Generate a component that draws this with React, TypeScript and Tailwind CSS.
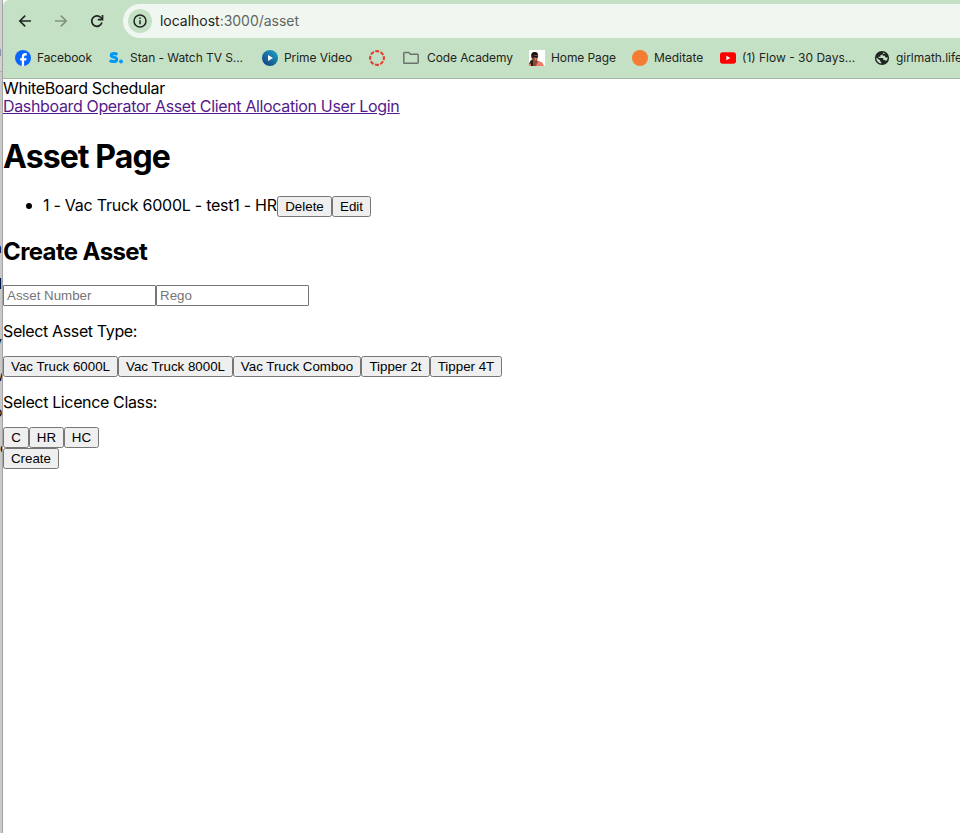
import type { ReactNode } from "react";

function Bookmark({ icon, label, className, text = "tracking-[-0.04px]" }: { icon: ReactNode; label?: string; className: string; text?: string }) {
  return (
    <div className={`flex shrink-0 items-center ${className}`}>
      <span className="flex h-4 w-4 shrink-0 items-center justify-center">{icon}</span>
      {label && <span className={`shrink-0 whitespace-nowrap ${text}`}>{label}</span>}
    </div>
  );
}

function Btn({ children, className }: { children: ReactNode; className: string }) {
  return (
    <button
      className={`flex h-[21px] shrink-0 items-center justify-center whitespace-nowrap rounded-[2.5px] border border-[#767676] bg-[#efefef] font-['Liberation_Sans',Arial,sans-serif] text-[13.333px] leading-[15px] text-black ${className}`}
    >
      {children}
    </button>
  );
}

function BrowserBar() {
  return (
    <header className="h-[79px] shrink-0 overflow-hidden rounded-tl-[6px] border-b border-[#a3b8a4] bg-[#c5e1c5] text-[#1f2421]">
      <div className="flex h-[42px] items-center pl-[14px]">
        <svg width="16" height="16" viewBox="0 0 16 16" fill="none" stroke="#1f2421" strokeWidth="1.6">
          <path d="M14 8H3M8.2 2.6 2.8 8l5.400 5.400" />
        </svg>
        <svg width="16" height="16" viewBox="0 0 16 16" fill="none" stroke="#82927f" strokeWidth="1.6" className="ml-5">
          <path d="M2 8h11M7.800 2.600 13.200 8l-5.400 5.400" />
        </svg>
        <svg width="16" height="16" viewBox="0 0 16 16" fill="none" stroke="#1f2421" strokeWidth="1.700" className="ml-5">
          <path d="M12.900 9.600A5.200 5.200 0 1 1 11.700 4.500L13.200 6" />
          <path d="M13.500 1.900v4.700H8.800" />
        </svg>
        <div className="ml-[18px] flex h-[34px] flex-1 items-center rounded-l-full bg-[#f0f7f0] pl-[5px]">
          <span className="flex h-6 w-6 items-center justify-center rounded-full bg-[#c5e1c5]">
            <svg width="14" height="14" viewBox="0 0 14 14" fill="none" stroke="#1f2421" strokeWidth="1.5">
              <circle cx="7" cy="7" r="6" />
              <path d="M7 6.2v4M7 3.6v1.4" />
            </svg>
          </span>
          <span className="-mt-px ml-2 whitespace-nowrap text-[14px] tracking-[-0.02px] text-[#5f6661]">
            <span className="text-[#1f2421]">localhost</span>:3000/asset
          </span>
        </div>
      </div>
      <div className="flex h-8 items-center pl-3 text-[12px]">
        <Bookmark className="w-[93px] gap-[6px]" text="tracking-[-0.1px]" label="Facebook" icon={
          <svg width="16" height="16" viewBox="0 0 16 16">
            <circle cx="8" cy="8" r="8" fill="#0866ff" />
            <path d="M6.8 16v-5.4H5.1V8.2h1.7V7.1c0-2.7 1.2-4 3.8-4 .4 0 .8 0 1.1.1v2.2h-1c-1.2 0-1.6.5-1.6 1.7v1.1h2.5l-.4 2.4H9.1V16z" fill="#fff" />
          </svg>} />
        <Bookmark className="w-[154px] gap-[6px]" text="tracking-[-0.07px]" label="Stan - Watch TV S..." icon={
          <svg width="16" height="16" viewBox="0 0 16 16" fill="none">
            <path d="M9.400 4.500C8.300 3.900 7.200 3.600 5.900 3.600c-1.800 0-2.700.7-2.700 1.700 0 2.800 5.500.9 5.500 3.900 0 1.500-1.200 2.400-3.200 2.400-1.500 0-2.800-.4-3.800-1.100" stroke="#0099fa" strokeWidth="3" />
            <circle cx="13" cy="11.500" r="1.900" fill="#0099fa" />
          </svg>} />
        <Bookmark className="w-[107px] gap-[6px]" text="tracking-[-0.08px]" label="Prime Video" icon={
          <svg width="16" height="16" viewBox="0 0 16 16">
            <defs><linearGradient id="prime" x1="1" y1="0" x2="0.2" y2="1"><stop stopColor="#20a5ca" /><stop offset="1" stopColor="#11447f" /></linearGradient></defs>
            <circle cx="8" cy="8" r="8" fill="url(#prime)" />
            <path d="m6 5 5 3-5 3z" fill="#fff" />
          </svg>} />
        <Bookmark className="w-[34px]" icon={
          <svg width="16" height="16" viewBox="0 0 16 16" fill="none">
            <circle cx="8" cy="8" r="6.9" stroke="#e63f30" strokeWidth="2.1" strokeDasharray="4 1.42" strokeDashoffset="2" />
          </svg>} />
        <Bookmark className="w-[126px] gap-2" text="tracking-[-0.1px]" label="Code Academy" icon={
          <svg width="16" height="16" viewBox="0 0 16 16" fill="none" stroke="#6b746c" strokeWidth="1.5">
            <path d="M.8 3.2q0-.7.7-.7h4.3l1.7 1.7h7q.7 0 .7.7v7.700q0 .7-.7.7h-13q-.7 0-.7-.7z" />
          </svg>} />
        <Bookmark className="w-[103px] gap-[6px]" text="tracking-[-0.1px]" label="Home Page" icon={
          <svg width="16" height="16" viewBox="0 0 16 16">
            <path fill="#fff" d="M0 0h16v16H0z" />
            <path d="M2.2 6.5C2 3.8 3.2 2 5.8 2c2.4 0 3.7 1.7 3.3 4.500L8 10.400l4.500 2L14 16H0v-3l3-3z" fill="#8e4935" />
            <path d="m9 11 4.400 1.800L15 16H7zM0 16v-1.500l2-1V16z" fill="#f27869" />
            <path d="M2.4 6C2 3.400 3.600 2 5.700 2S9 3.600 9 5.500L7.800 5l-3 .3L3 8zM3 6h5.700v1.500H6.500L6 6.800l-.6.8H3.500zM1 11l2.600-1.200L4 16H2.400z" fill="#171518" />
            <path d="m5.700 8 2 .1-.7 2.300-1.300-.4z" fill="#d68367" />
          </svg>} />
        <Bookmark className="w-[88px] gap-[6px]" label="Meditate" icon={<span className="h-4 w-4 rounded-full bg-[#f47d31]" />} />
        <Bookmark className="w-[154px] gap-[6px]" text="" label="(1) Flow - 30 Days..." icon={
          <svg width="16" height="16" viewBox="0 0 16 16">
            <rect y="2.3" width="16" height="11.4" rx="2.7" fill="#f00" />
            <path d="m6.300 5.700 4 2.300-4 2.300z" fill="#fff" />
          </svg>} />
        <Bookmark className="w-[90px] gap-[6px]" label="girlmath.life" icon={
          <svg width="16" height="16" viewBox="0 0 16 16">
            <circle cx="8" cy="8" r="7.100" fill="#1f2421" />
            <path d="M9 2.500v1.100q0 1.300-1.300 1.300H6.500v1.300q0 .6-.7.6H4.600v1.100h4q.7 0 .7.700v1.300h1.200q1 0 1.200.9l.3.400a5.700 5.700 0 0 0 1.800-3.600h-1.700q-1.100 0-1.100-1.100V5.800H8.700V5q0-1.200 1.200-1.200h1.300A5.700 5.700 0 0 0 9 2.500zM2.300 7.500l3.900 3v.6q0 1.100 1.100 1.100v1.400A5.700 5.700 0 0 1 2.300 7.500z" fill="#c5e1c5" />
          </svg>} />
      </div>
    </header>
  );
}

function UnderlyingWindow() {
  return (
    <aside className="h-full w-[3px] shrink-0 overflow-hidden border-r border-[#a4a4a4] bg-[#c9c9c9] text-[14px] leading-4 text-black">
      <div className="h-[71px] bg-[#d1d1d1] pt-[43px] text-[#888]"><span className="-ml-[6px]">a</span></div>
      <div className="h-px bg-[#aaa]" />
      <div className="-ml-[6px] mt-[168px] h-9">a</div>
      <div className="-ml-[7px] h-[58px] font-bold">d</div>
      <div className="-ml-[6px] h-[34px]">y</div>
      <div className="-ml-[8px] h-9">w</div>
      <div className="-ml-[6px] h-9">o</div>
      <div>c</div>
    </aside>
  );
}

export default function App() {
  return (
    <div className="flex h-[833px] w-[960px] overflow-hidden bg-white font-['Inter',sans-serif] text-black">
      <UnderlyingWindow />
      <div className="flex min-w-0 flex-1 flex-col">
        <BrowserBar />
        <main className="text-[16px] leading-[18px]">
          <div className="whitespace-nowrap tracking-[-0.36px]">WhiteBoard Schedular</div>
          <nav className="whitespace-nowrap tracking-[-0.35px] text-[#551a8b] underline">
            <a href="#dashboard">Dashboard </a><a href="#operator">Operator </a><a href="#asset">Asset </a><a href="#client">Client </a><a href="#allocation">Allocation </a><a href="#user">User </a><a href="#login">Login</a>
          </nav>
          <h1 className="mt-[22px] h-[38px] pt-px text-[32px] font-bold leading-[38px] tracking-[-0.9px]">Asset Page</h1>
          <ul className="mt-[21px]">
            <li className="flex h-[21px] items-start">
              <span className="ml-[23px] mt-[7px] h-[6px] w-[6px] rounded-full bg-black" />
              <span className="ml-[11px] w-[234px] whitespace-nowrap tracking-[-0.25px]">1 - Vac Truck 6000L - test1 - HR</span>
              <Btn className="w-[55px]">Delete</Btn>
              <Btn className="w-[39px]">Edit</Btn>
            </li>
          </ul>
          <h2 className="mt-5 h-[29px] text-[24px] font-bold leading-[29px] tracking-[-0.62px]">Create Asset</h2>
          <div className="mt-[19px] flex font-['Liberation_Sans',Arial,sans-serif] text-[13.333px]">
            <input placeholder="Asset Number" className="h-[21px] w-[153px] rounded-[1px] border border-[#767676] px-[3px] leading-[15px] placeholder:text-[#757575]" />
            <input placeholder="Rego" className="h-[21px] w-[153px] rounded-[1px] border border-[#767676] px-[3px] leading-[15px] placeholder:text-[#757575]" />
          </div>
          <p className="mt-4 tracking-[-0.37px]">Select Asset Type:</p>
          <div className="mt-4 flex">
            <Btn className="w-[115px]">Vac Truck 6000L</Btn>
            <Btn className="w-[115px]">Vac Truck 8000L</Btn>
            <Btn className="w-[128px]">Vac Truck Comboo</Btn>
            <Btn className="w-[69px]">Tipper 2t</Btn>
            <Btn className="w-[72px]">Tipper 4T</Btn>
          </div>
          <p className="mt-4 tracking-[-0.36px]">Select Licence Class:</p>
          <div className="mt-4 flex">
            <Btn className="w-[26px]">C</Btn>
            <Btn className="w-[35px]">HR</Btn>
            <Btn className="w-[35px]">HC</Btn>
          </div>
          <Btn className="w-14">Create</Btn>
        </main>
      </div>
    </div>
  );
}
